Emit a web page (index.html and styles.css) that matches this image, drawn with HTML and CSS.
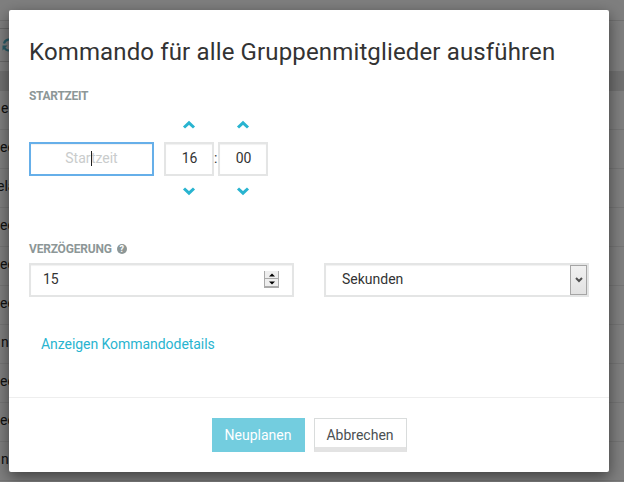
FILE: index.html
```html
<!DOCTYPE html>
<html lang="de">
<head>
<meta charset="utf-8">
<title>Kommando ausführen</title>
<link rel="stylesheet" href="styles.css">
</head>
<body>
<main class="page">
  <div class="topbar"></div>
  <div class="toolbar"><div class="tool">
    <svg width="14" height="14" viewBox="0 0 14 14" fill="none" stroke="#52b8ce" stroke-width="2.2"><path d="M2 5.5A5.2 5.2 0 0 1 11.5 4M12 8.5A5.2 5.2 0 0 1 2.5 10"/><path d="M0.5 7.5h5l-5 5zM13.5 6.5h-5l5-5z" fill="#52b8ce" stroke="none"/></svg>
  </div></div>
  <div class="table-head"></div>
  <div class="row"><span class="single">e</span></div>
  <div class="row">ec</div>
  <div class="row"><span class="shifted">ela</span></div>
  <div class="row">ec</div>
  <div class="row">ec</div>
  <div class="row">ec</div>
  <div class="row"><span class="single">n</span></div>
  <div class="row">ec</div>
  <div class="row">ec</div>
  <div class="row"><span class="single">n</span></div>
</main>
<div class="backdrop">
  <section class="modal">
    <div class="body">
      <h1>Kommando für alle Gruppenmitglieder ausführen</h1>
      <div class="label label-start">STARTZEIT</div>
      <div class="schedule">
        <div class="field date"><span class="placeholder">Startzeit</span><i class="caret"></i></div>
        <div class="spinner">
          <svg class="chevron" viewBox="0 0 14 10"><path d="M2 7.5 7 2.8l5 4.7"/></svg>
          <div class="field">16</div>
          <svg class="chevron" viewBox="0 0 14 10"><path d="M2 2.5 7 7.2l5-4.7"/></svg>
        </div>
        <span class="colon">:</span>
        <div class="spinner">
          <svg class="chevron" viewBox="0 0 14 10"><path d="M2 7.5 7 2.8l5 4.7"/></svg>
          <div class="field">00</div>
          <svg class="chevron" viewBox="0 0 14 10"><path d="M2 2.5 7 7.2l5-4.7"/></svg>
        </div>
      </div>
      <div class="label label-delay"><span>VERZÖGERUNG</span><span class="help">?</span></div>
      <div class="delay">
        <div class="field number"><span>15</span>
          <div class="stepper">
            <b><svg width="6" height="4" viewBox="0 0 6 4"><path d="M0 3.5h6L3 .5z"/></svg></b>
            <b><svg width="6" height="4" viewBox="0 0 6 4"><path d="M0 .5h6l-3 3z"/></svg></b>
          </div>
        </div>
        <div class="field select"><span>Sekunden</span>
          <div class="drop"><svg width="8" height="6" viewBox="0 0 8 6"><path d="M1 1l3 3 3-3" fill="none" stroke="#505050" stroke-width="2"/></svg></div>
        </div>
      </div>
      <a class="details">Anzeigen Kommandodetails</a>
    </div>
    <footer>
      <div class="btn primary"><span>Neuplanen</span></div>
      <div class="btn plain"><span>Abbrechen</span></div>
    </footer>
  </section>
</div>
</body>
</html>
```
FILE: styles.css
```css
* { box-sizing: border-box; }
body { margin: 0; height: 482px; overflow: hidden; background: #fff; color: #333; font: 14px/18px Roboto, "Liberation Sans", sans-serif; }
.page { height: 482px; overflow: hidden; }
.topbar { height: 21px; border-bottom: 1px solid #e2e2e2; }
.toolbar { height: 50px; padding-top: 7px; }
.tool { width: 20px; height: 34px; padding: 9px 0 0 2px; border: solid #d0d0d0; border-width: 1px 0; }
.tool svg { display: block; }
.table-head { height: 20px; background: #e2e2e2; }
.row { height: 39px; padding-top: 8px; border-bottom: 1px solid #eaeaea; color: #222; }
.single { margin-left: 1px; }
.shifted { margin-left: -3px; }
.backdrop { position: absolute; inset: 0; padding: 10px 15px 10px 9px; background: rgba(0, 0, 0, .5); }
.modal { width: 600px; height: 462px; border-radius: 2px; background: #fff; box-shadow: 0 5px 15px rgba(0, 0, 0, .5); }
.body { height: 387px; padding: 27px 20px 0; }
h1 { margin: 0; height: 30px; font-size: 24px; font-weight: 400; line-height: 30px; letter-spacing: .14px; white-space: nowrap; }
.label { height: 16px; font-size: 12px; line-height: 16px; font-weight: 700; color: #8d9797; white-space: nowrap; }
.label-start { margin-top: 21px; letter-spacing: -.3px; }
.schedule { display: flex; align-items: center; height: 76px; margin-top: 16px; }
.field { height: 34px; border: 2px solid #e4e5e5; background: #fff; box-shadow: inset 0 1px 1px rgba(0, 0, 0, .06); line-height: 28px; white-space: nowrap; }
.date { position: relative; width: 125px; margin: 2px 10px 0 0; border-color: #66afe9; text-align: center; color: #c9cccc; }
.caret { position: absolute; left: 60px; top: 7px; width: 1px; height: 15px; background: #222; }
.spinner { display: flex; flex-direction: column; justify-content: space-between; align-items: center; width: 50px; height: 76px; }
.spinner .field { width: 50px; margin-top: 2px; padding-left: 1px; text-align: center; }
.chevron { width: 14px; height: 10px; fill: none; stroke: #29b4d0; stroke-width: 3; }
.colon { width: 4px; line-height: 28px; }
.label-delay { display: flex; align-items: center; gap: 5px; margin-top: 45px; letter-spacing: -.2px; }
.help { width: 10px; height: 10px; border-radius: 50%; background: #8d9797; color: #fff; font-size: 9px; line-height: 10px; text-align: center; letter-spacing: 0; }
.delay { display: flex; gap: 30px; margin-top: 6px; }
.number, .select { display: flex; justify-content: space-between; width: 265px; }
.number { padding: 0 13px 0 12px; }
.stepper { width: 15px; height: 17px; margin-top: 6px; border: 1px solid #aaa; border-top: 0; background: #eee; }
.stepper b { display: flex; align-items: center; justify-content: center; height: 8px; border-bottom: 1px solid #aaa; }
.stepper svg { display: block; }
.select { padding-left: 16px; }
.drop { display: flex; align-items: center; justify-content: center; width: 17px; height: 30px; border: 1px solid #a5a5a5; background: linear-gradient(#f1f1f1, #e2e2e2); }
.details { display: block; margin: 38px 0 0 12px; color: #29b4d0; letter-spacing: -.05px; }
footer { display: flex; justify-content: center; gap: 9px; height: 75px; padding-top: 20px; border-top: 1px solid #eee; }
.btn { width: 93px; height: 34px; text-align: center; line-height: 34px; }
.primary { background: #73cddf; color: #fff; }
.plain { border: 1px solid #d9dcdc; border-bottom: 5px solid #e3e3e3; line-height: 32px; color: #4b5052; }
```
